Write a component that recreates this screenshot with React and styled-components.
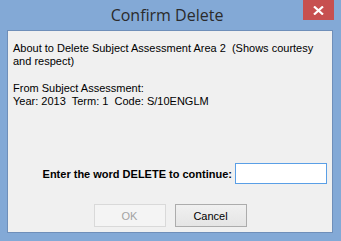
import React from 'react';
import styled, { createGlobalStyle } from 'styled-components';

const GlobalStyle = createGlobalStyle`
  html, body {
    margin: 0;
    padding: 0;
    background: #82a8d6;
  }
`;

const Window = styled.div`
  width: 341px;
  height: 241px;
  box-sizing: border-box;
  display: flex;
  flex-direction: column;
  background: #83a9d6;
  padding: 0 8px 8px 7px;
  font-family: "Liberation Sans", Arial, sans-serif;
`;

const TitleBar = styled.div`
  height: 30px;
  margin: 0 -8px 0 -7px;
  padding-right: 7px;
  display: grid;
  grid-template-columns: 1fr auto 1fr;
`;

const Title = styled.div`
  grid-column: 2;
  align-self: center;
  font-family: "Open Sans", "Noto Sans", sans-serif;
  font-size: 16px;
  color: #2b2b2b;
  padding-bottom: 1px;
`;

const CloseButton = styled.div`
  grid-column: 3;
  justify-self: end;
  align-self: start;
  width: 31px;
  height: 20px;
  background: #c75050;
  display: flex;
  align-items: center;
  justify-content: center;
`;

const Panel = styled.div`
  flex: 1;
  display: flex;
  flex-direction: column;
  background: #f0f0f0;
  border: 1px solid #6f8fb9;
  padding: 11px 5px 5px 5px;
`;

const Message = styled.p`
  margin: 0;
  font-size: 11px;
  line-height: 13px;
  color: #000;
`;

const Gap = styled.div`
  height: 14px;
`;

const ConfirmRow = styled.div`
  margin-top: auto;
  display: flex;
  justify-content: flex-end;
  align-items: center;
  gap: 3px;
`;

const Label = styled.label`
  font-size: 11px;
  font-weight: 700;
  color: #000;
`;

const Field = styled.input`
  width: 92px;
  height: 21px;
  box-sizing: border-box;
  border: 1px solid #5a9fe6;
  background: #fff;
  outline: none;
  padding: 0 3px;
  font-family: inherit;
  font-size: 11px;
`;

const ButtonRow = styled.div`
  margin-top: 20px;
  display: flex;
  justify-content: center;
  gap: 9px;
`;

const Button = styled.button`
  width: 72px;
  height: 23px;
  box-sizing: border-box;
  padding: 0;
  font-family: inherit;
  font-size: 11px;
  border: 1px solid ${(p) => (p.disabled ? '#d9d9d9' : '#acacac')};
  background: ${(p) => (p.disabled ? '#f4f4f4' : 'linear-gradient(#f0f0f0, #e5e5e5)')};
  color: ${(p) => (p.disabled ? '#a3a3a3' : '#000')};
`;

export default function App() {
  return (
    <>
      <GlobalStyle />
      <Window>
        <TitleBar>
          <Title>Confirm Delete</Title>
          <CloseButton>
            <svg width="11" height="9" viewBox="0 0 11 9">
              <path d="M1 0.5 L10 8.5 M10 0.5 L1 8.5" stroke="#fff" strokeWidth="2.2" />
            </svg>
          </CloseButton>
        </TitleBar>
        <Panel>
          <Message>
            About to Delete Subject Assessment Area 2&nbsp; (Shows courtesy
            <br />
            and respect)
          </Message>
          <Gap />
          <Message>
            From Subject Assessment:
            <br />
            Year: 2013&nbsp; Term: 1&nbsp; Code: S/10ENGLM
          </Message>
          <ConfirmRow>
            <Label htmlFor="confirm">Enter the word DELETE to continue:</Label>
            <Field id="confirm" />
          </ConfirmRow>
          <ButtonRow>
            <Button disabled>OK</Button>
            <Button>Cancel</Button>
          </ButtonRow>
        </Panel>
      </Window>
    </>
  );
}
